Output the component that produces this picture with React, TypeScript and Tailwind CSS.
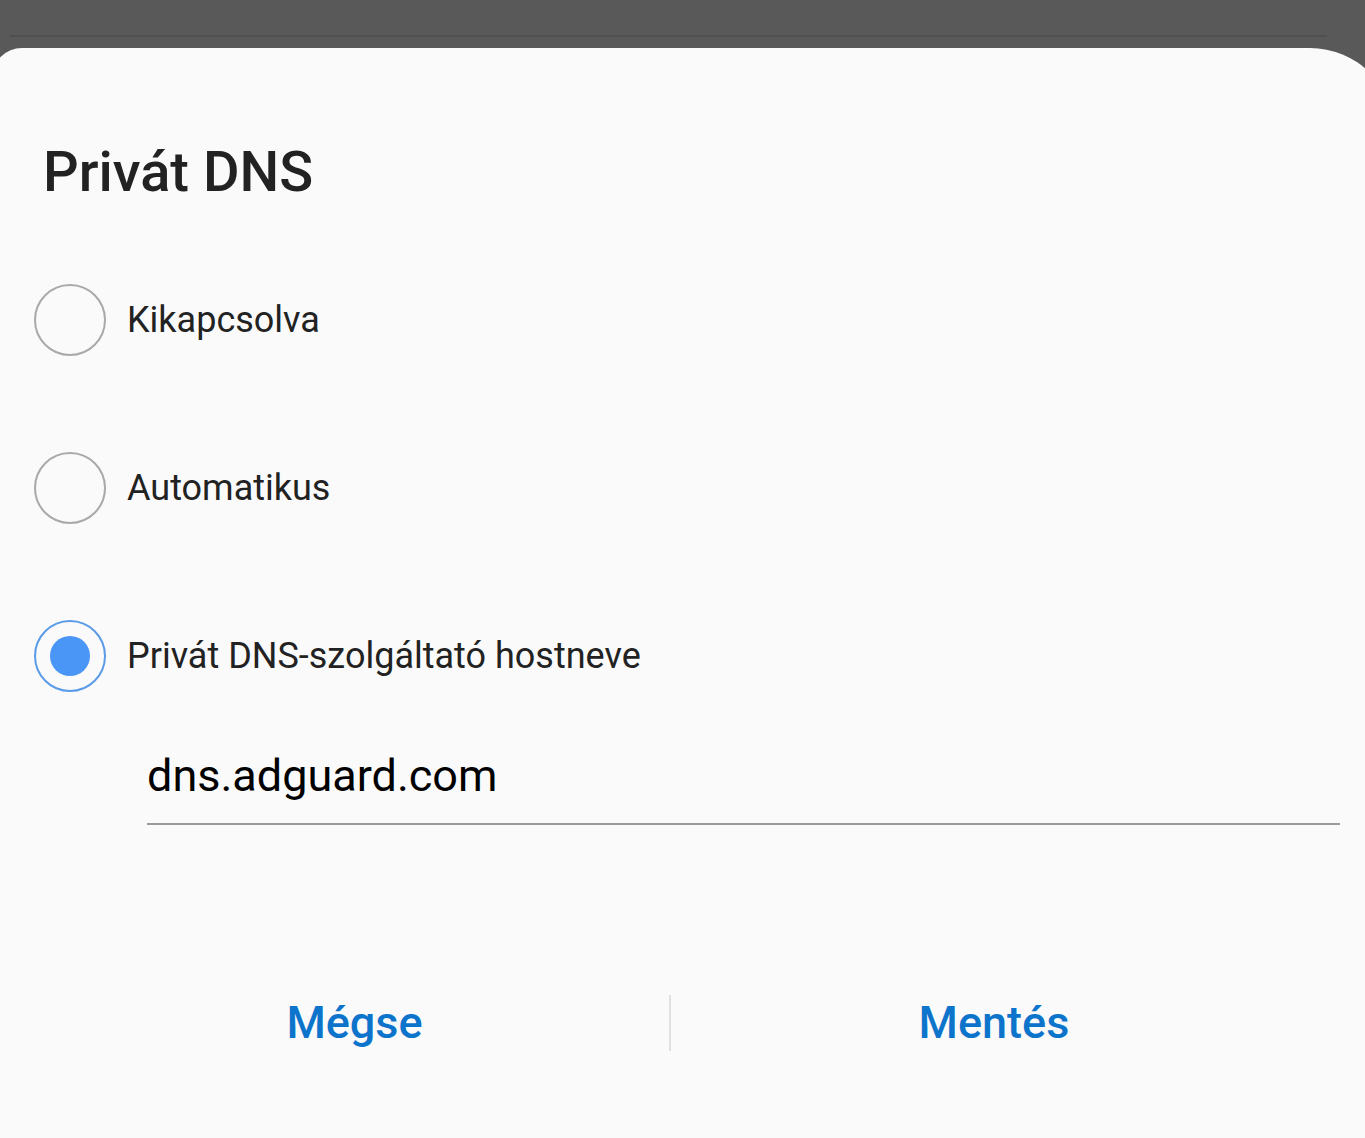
import React, { useState } from 'react';

const options = [
  { id: 'off', label: 'Kikapcsolva' },
  { id: 'auto', label: 'Automatikus' },
  { id: 'host', label: 'Privát DNS-szolgáltató hostneve' },
];

function Radio({ checked }: { checked: boolean }) {
  return (
    <span
      className={
        'flex h-[72px] w-[72px] shrink-0 items-center justify-center rounded-full border-2 ' +
        (checked ? 'border-[#5a9be8]' : 'border-[#a9a9a9]')
      }
    >
      {checked && <span className="h-[40px] w-[40px] rounded-full bg-[#4a96f6]" />}
    </span>
  );
}

export default function App() {
  const [selected, setSelected] = useState('host');
  const [host, setHost] = useState('dns.adguard.com');

  return (
    <div className="flex h-[1138px] w-full flex-col overflow-hidden bg-[#595959] font-['Roboto','Noto_Sans',sans-serif]">
      {/* dimmed screen behind the dialog */}
      <div className="flex h-[48px] shrink-0 flex-col px-[10px] pt-[35px]">
        <div className="h-[2px] w-[1317px] bg-[#505050]" />
      </div>

      <div className="-ml-[8px] -mr-[30px] flex flex-1 flex-col rounded-tl-[30px] rounded-tr-[85px] bg-[#fafafa] pl-[8px] pr-[30px]">
        <h1 className="pl-[43px] pt-[92px] text-[56px] font-medium leading-[64px] text-[#222222]">
          Privát DNS
        </h1>

        <div className="mt-[80px] flex flex-col gap-[96px] pl-[34px]">
          {options.map((o) => (
            <button
              key={o.id}
              onClick={() => setSelected(o.id)}
              className="flex items-center gap-[21px] text-left"
            >
              <Radio checked={selected === o.id} />
              <span className="text-[36px] leading-[40px] text-[#222222]">{o.label}</span>
            </button>
          ))}
        </div>

        <div className="ml-[147px] mr-[25px] mt-[59px] border-b-2 border-[#9a9a9a] pb-[22px]">
          <input
            value={host}
            onChange={(e) => setHost(e.target.value)}
            className="w-full bg-transparent text-[45px] leading-[50px] text-black outline-none"
          />
        </div>

        <div className="mt-[170px] flex items-center pl-[40px]">
          <button className="w-[629px] text-[45px] font-medium leading-[52px] text-[#0d74cc]">Mégse</button>
          <div className="h-[56px] w-[2px] bg-[#e0e0e0]" />
          <button className="w-[646px] text-[45px] font-medium leading-[52px] text-[#0d74cc]">Mentés</button>
        </div>
      </div>
    </div>
  );
}
